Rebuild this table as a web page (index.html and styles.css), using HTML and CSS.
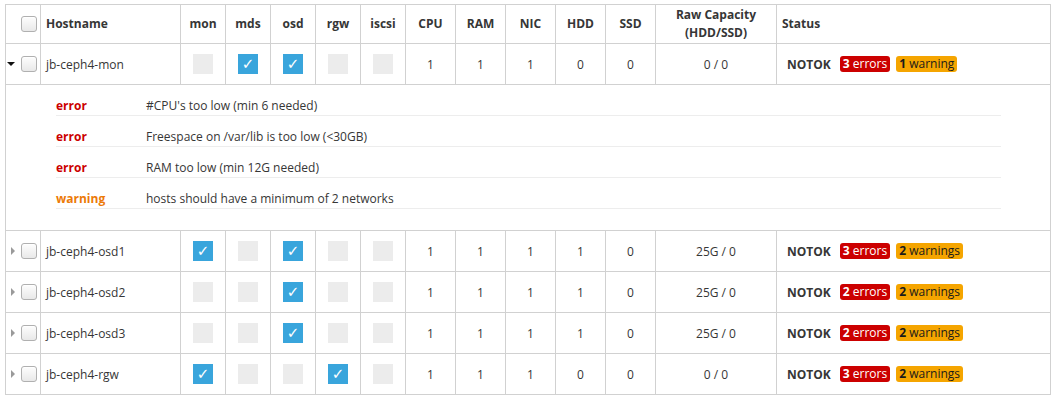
FILE: index.html
```html
<!DOCTYPE html>
<html>
<head>
<meta charset="utf-8">
<link rel="stylesheet" href="styles.css">
</head>
<body>
<table class="hosts">
  <colgroup>
    <col class="w-sel"><col class="w-host">
    <col class="w-role"><col class="w-role"><col class="w-role"><col class="w-role"><col class="w-role">
    <col class="w-num"><col class="w-num"><col class="w-num"><col class="w-num"><col class="w-num">
    <col class="w-raw"><col class="w-status">
  </colgroup>
  <thead>
    <tr>
      <th class="sel"><div class="sel-in"><span class="cb"></span></div></th>
      <th class="left">Hostname</th>
      <th>mon</th><th>mds</th><th>osd</th><th>rgw</th><th>iscsi</th>
      <th>CPU</th><th>RAM</th><th>NIC</th><th>HDD</th><th>SSD</th>
      <th class="raw-h">Raw Capacity<br>(HDD/SSD)</th>
      <th class="left status-h">Status</th>
    </tr>
  </thead>
  <tbody>
    <tr>
      <td class="sel"><div class="sel-in"><span class="tri-down"></span><span class="cb"></span></div></td>
      <td class="host">jb-ceph4-mon</td>
      <td><span class="role"></span></td><td><span class="role on">✓</span></td><td><span class="role on">✓</span></td><td><span class="role"></span></td><td><span class="role"></span></td>
      <td>1</td><td>1</td><td>1</td><td>0</td><td>0</td>
      <td>0 / 0</td>
      <td class="status"><div class="st"><b class="notok">NOTOK</b><span class="badge err"><b>3</b> errors</span><span class="badge warn"><b>1</b> warning</span></div></td>
    </tr>
    <tr class="detail">
      <td colspan="14" class="detail-cell">
        <table class="msgs">
          <tr><td class="lbl err-t">error</td><td>#CPU's too low (min 6 needed)</td></tr>
          <tr><td class="lbl err-t">error</td><td>Freespace on /var/lib is too low (&lt;30GB)</td></tr>
          <tr><td class="lbl err-t">error</td><td>RAM too low (min 12G needed)</td></tr>
          <tr><td class="lbl warn-t">warning</td><td>hosts should have a minimum of 2 networks</td></tr>
        </table>
      </td>
    </tr>
    <tr>
      <td class="sel"><div class="sel-in"><span class="tri-right"></span><span class="cb"></span></div></td>
      <td class="host">jb-ceph4-osd1</td>
      <td><span class="role on">✓</span></td><td><span class="role"></span></td><td><span class="role on">✓</span></td><td><span class="role"></span></td><td><span class="role"></span></td>
      <td>1</td><td>1</td><td>1</td><td>1</td><td>0</td>
      <td>25G / 0</td>
      <td class="status"><div class="st"><b class="notok">NOTOK</b><span class="badge err"><b>3</b> errors</span><span class="badge warn"><b>2</b> warnings</span></div></td>
    </tr>
    <tr>
      <td class="sel"><div class="sel-in"><span class="tri-right"></span><span class="cb"></span></div></td>
      <td class="host">jb-ceph4-osd2</td>
      <td><span class="role"></span></td><td><span class="role"></span></td><td><span class="role on">✓</span></td><td><span class="role"></span></td><td><span class="role"></span></td>
      <td>1</td><td>1</td><td>1</td><td>1</td><td>0</td>
      <td>25G / 0</td>
      <td class="status"><div class="st"><b class="notok">NOTOK</b><span class="badge err"><b>2</b> errors</span><span class="badge warn"><b>2</b> warnings</span></div></td>
    </tr>
    <tr>
      <td class="sel"><div class="sel-in"><span class="tri-right"></span><span class="cb"></span></div></td>
      <td class="host">jb-ceph4-osd3</td>
      <td><span class="role"></span></td><td><span class="role"></span></td><td><span class="role on">✓</span></td><td><span class="role"></span></td><td><span class="role"></span></td>
      <td>1</td><td>1</td><td>1</td><td>1</td><td>0</td>
      <td>25G / 0</td>
      <td class="status"><div class="st"><b class="notok">NOTOK</b><span class="badge err"><b>2</b> errors</span><span class="badge warn"><b>2</b> warnings</span></div></td>
    </tr>
    <tr>
      <td class="sel"><div class="sel-in"><span class="tri-right"></span><span class="cb"></span></div></td>
      <td class="host">jb-ceph4-rgw</td>
      <td><span class="role on">✓</span></td><td><span class="role"></span></td><td><span class="role"></span></td><td><span class="role on">✓</span></td><td><span class="role"></span></td>
      <td>1</td><td>1</td><td>1</td><td>0</td><td>0</td>
      <td>0 / 0</td>
      <td class="status"><div class="st"><b class="notok">NOTOK</b><span class="badge err"><b>3</b> errors</span><span class="badge warn"><b>2</b> warnings</span></div></td>
    </tr>
  </tbody>
</table>
</body>
</html>
```
FILE: styles.css
```css
html, body {
  margin: 0;
  padding: 0;
  background: #fff;
}
body {
  font-family: "Open Sans", "Noto Sans", sans-serif;
  font-size: 12px;
  color: #363636;
}
.hosts {
  margin: 4px 5px;
  width: 1046px;
  table-layout: fixed;
  border-collapse: collapse;
}
.w-sel { width: 35px; }
.w-host { width: 140px; }
.w-role { width: 45px; }
.w-num { width: 50px; }
.w-raw { width: 121px; }
.w-status { width: 274px; }

.hosts th, .hosts > tbody > tr > td {
  border: 1px solid #d1d1d1;
  text-align: center;
  vertical-align: middle;
  padding: 0;
}
.hosts th {
  height: 38px;
  font-weight: 700;
  line-height: 18px;
  color: #363636;
}
.hosts th.raw-h { line-height: 18px; }
.hosts > tbody > tr > td {
  height: 40px;
}
.hosts th.left { text-align: left; padding-left: 5px; }
.hosts th.status-h { padding-left: 5px; }
.hosts td.host { text-align: left; padding-left: 5px; }

.sel-in {
  display: flex;
  justify-content: flex-end;
  align-items: center;
  gap: 5px;
  padding-right: 3px;
}
.cb {
  display: inline-block;
  width: 14px;
  height: 14px;
  border: 1px solid #b0b0b0;
  border-radius: 3px;
  background: linear-gradient(#fdfdfd, #e8e8e8);
  box-shadow: inset 0 1px 0 #fff;
}
.tri-down {
  width: 0;
  height: 0;
  border-left: 4px solid transparent;
  border-right: 4px solid transparent;
  border-top: 4px solid #111;
  margin-right: 1px;
}
.tri-right {
  width: 0;
  height: 0;
  border-top: 4px solid transparent;
  border-bottom: 4px solid transparent;
  border-left: 4px solid #9a9a9a;
  margin-right: 1px;
}

.role {
  display: inline-block;
  width: 20px;
  height: 20px;
  background: #ececec;
  vertical-align: middle;
  color: #fff;
  font-family: "DejaVu Sans", sans-serif;
  font-size: 15px;
  line-height: 21px;
  text-align: center;
}
.role.on { background: #39a5dc; }

.hosts td.status { text-align: left; padding-left: 10px; }
.st { display: flex; align-items: center; }
.notok { font-weight: 700; color: #363636; margin-right: 9px; }
.badge {
  display: inline-block;
  height: 16px;
  line-height: 16px;
  padding: 0 3px;
  border-radius: 3px;
  margin-right: 6px;
}
.badge b { font-weight: 700; }
.badge.err { background: #cc0000; color: #fff; }
.badge.warn { background: #f5a500; color: #1a1a1a; }

.hosts > tbody > tr.detail > td.detail-cell {
  height: auto;
  padding: 0 49px 21px 50px;
  text-align: left;
}
.msgs {
  width: 100%;
  border-collapse: collapse;
}
.msgs td {
  padding: 12px 0 0;
  line-height: 18px;
  border-bottom: 1px solid #ededed;
  vertical-align: middle;
  text-align: left;
}
.msgs td.lbl { width: 90px; font-weight: 700; }
.err-t { color: #cc0000; }
.warn-t { color: #ec7a08; }
```
